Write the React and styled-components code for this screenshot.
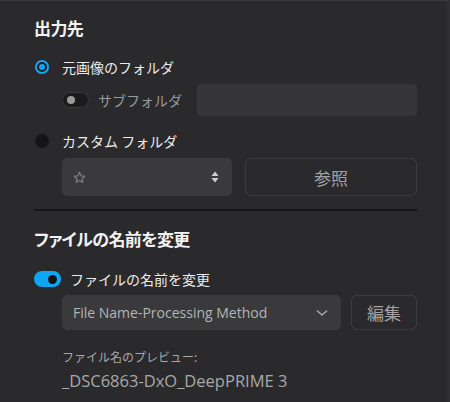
import React from 'react';
import styled, { createGlobalStyle } from 'styled-components';

const Global = createGlobalStyle`
  html, body { margin: 0; padding: 0; background: #2a2a2c; }
  body {
    font-family: "Noto Sans CJK JP", "Noto Sans", sans-serif;
    color: #e6e6e6;
  }
`

const Panel = styled.div`
  width: 450px;
  height: 402px;
  box-sizing: border-box;
  border-top: 1px solid #3a3a3c;
  border-right: 3px solid #303033;
  padding: 17px 30px 0 34px;
  display: flex;
  flex-direction: column;
  overflow: hidden;
`

const Title = styled.div`
  font-size: 17px;
  font-weight: 700;
  line-height: 20px;
  color: #f2f2f2;
  font-feature-settings: "palt";
  letter-spacing: -0.6px;
  margin-top: ${p => p.$mt || 0}px;
`

const Row = styled.div`
  display: flex;
  align-items: center;
  height: ${p => p.$h || 20}px;
  margin-top: ${p => p.$mt || 0}px;
  padding-left: ${p => p.$indent || 0}px;
`

const Radio = styled.span`
  width: 14px;
  height: 14px;
  border-radius: 50%;
  flex: none;
  margin-left: 1px;
  background: ${p => p.$on ? '#14a6f2' : '#151516'};
  box-shadow: ${p => p.$on ? 'inset 0 0 0 2px #14a6f2, inset 0 0 0 4px #1a1a1b' : 'none'};
`

const Label = styled.span`
  font-size: 14px;
  line-height: 20px;
  color: ${p => p.$dim ? '#9a9a9a' : '#ececec'};
  margin-left: ${p => p.$ml || 0}px;
  white-space: nowrap;
`

const Toggle = styled.span`
  width: 27px;
  height: 16px;
  border-radius: 8px;
  box-sizing: border-box;
  flex: none;
  display: flex;
  align-items: center;
  justify-content: ${p => p.$on ? 'flex-end' : 'flex-start'};
  padding: 0 4px;
  background: ${p => p.$on ? '#0ea5f5' : '#1b1b1c'};
  border: ${p => p.$on ? 'none' : '1px solid #383839'};
  &::after {
    content: '';
    width: ${p => p.$on ? 9 : 8}px;
    height: ${p => p.$on ? 9 : 8}px;
    border-radius: 50%;
    background: ${p => p.$on ? '#111' : '#9a9a9a'};
  }
`

const SubLabelCell = styled.div`
  width: 135px;
  display: flex;
  align-items: center;
  flex: none;
`

const TextBox = styled.div`
  flex: 1;
  height: 32px;
  border-radius: 4px;
  background: #363638;
`

const Fields = styled.div`
  display: grid;
  grid-template-columns: ${p => p.$cols};
  gap: ${p => p.$gap}px;
  padding-left: 28px;
  height: ${p => p.$h}px;
  margin-top: ${p => p.$mt}px;
`

const Select = styled.div`
  background: #3a3a3c;
  border-radius: 5px;
  display: flex;
  align-items: center;
  justify-content: space-between;
  padding: 0 13px 0 11px;
  font-family: "Open Sans", "Noto Sans", sans-serif;
  font-size: 14px;
  color: #b4b4b4;
`

const Button = styled.div`
  border: 1.5px solid #3d3d3f;
  border-radius: 6px;
  display: flex;
  align-items: center;
  justify-content: center;
  font-size: 17px;
  color: #a2a2a2;
`

const Divider = styled.div`
  height: 2px;
  background: #161617;
  margin-top: 13px;
`

const Preview = styled.div`
  padding-left: 28px;
  color: #a8a8a8;
  margin-top: ${p => p.$mt}px;
  font-size: ${p => p.$fs}px;
  line-height: ${p => p.$lh}px;
  font-family: ${p => p.$latin ? '"Open Sans", "Noto Sans CJK JP", sans-serif' : '"Noto Sans CJK JP", sans-serif'};
  white-space: nowrap;
`

const Star = () => (
  <svg width="13" height="13" viewBox="0 0 24 24" fill="none" stroke="#7c7c7e" strokeWidth="2.4" strokeLinejoin="round">
    <polygon points="12,2.5 14.9,8.9 21.8,9.6 16.6,14.2 18.1,21 12,17.5 5.9,21 7.4,14.2 2.2,9.6 9.1,8.9" />
  </svg>
)

const UpDown = () => (
  <svg width="8" height="12" viewBox="0 0 8 12" fill="#cfcfcf">
    <polygon points="4,0.5 7.5,5 0.5,5" />
    <polygon points="0.5,7 7.5,7 4,11.5" />
  </svg>
)

const Chevron = () => (
  <svg width="12" height="8" viewBox="0 0 12 8" fill="none" stroke="#a8a8a8" strokeWidth="1.6" strokeLinecap="round" strokeLinejoin="round">
    <polyline points="1.5,2 6,6 10.5,2" />
  </svg>
)

export default function App() {
  return (
    <>
      <Global />
      <Panel>
        <Title>出力先</Title>

        <Row $mt={19}>
          <Radio $on />
          <Label $ml={13}>元画像のフォルダ</Label>
        </Row>

        <Row $mt={7} $h={32} $indent={28}>
          <SubLabelCell>
            <Toggle />
            <Label $dim $ml={9}>サブフォルダ</Label>
          </SubLabelCell>
          <TextBox />
        </Row>

        <Row $mt={15}>
          <Radio />
          <Label $ml={13}>カスタム フォルダ</Label>
        </Row>

        <Fields $cols="170px 1fr" $gap={13} $h={38} $mt={7}>
          <Select>
            <Star />
            <UpDown />
          </Select>
          <Button>参照</Button>
        </Fields>

        <Divider />

        <Title $mt={18}>ファイルの名前を変更</Title>

        <Row $mt={20}>
          <Toggle $on />
          <Label $ml={9}>ファイルの名前を変更</Label>
        </Row>

        <Fields $cols="279px 1fr" $gap={10} $h={35} $mt={6}>
          <Select>
            <span>File Name-Processing Method</span>
            <Chevron />
          </Select>
          <Button>編集</Button>
        </Fields>

        <Preview $mt={19} $fs={12} $lh={16}>ファイル名のプレビュー:</Preview>
        <Preview $mt={6} $fs={16.5} $lh={20} $latin>_DSC6863-DxO_DeepPRIME 3</Preview>
      </Panel>
    </>
  )
}
